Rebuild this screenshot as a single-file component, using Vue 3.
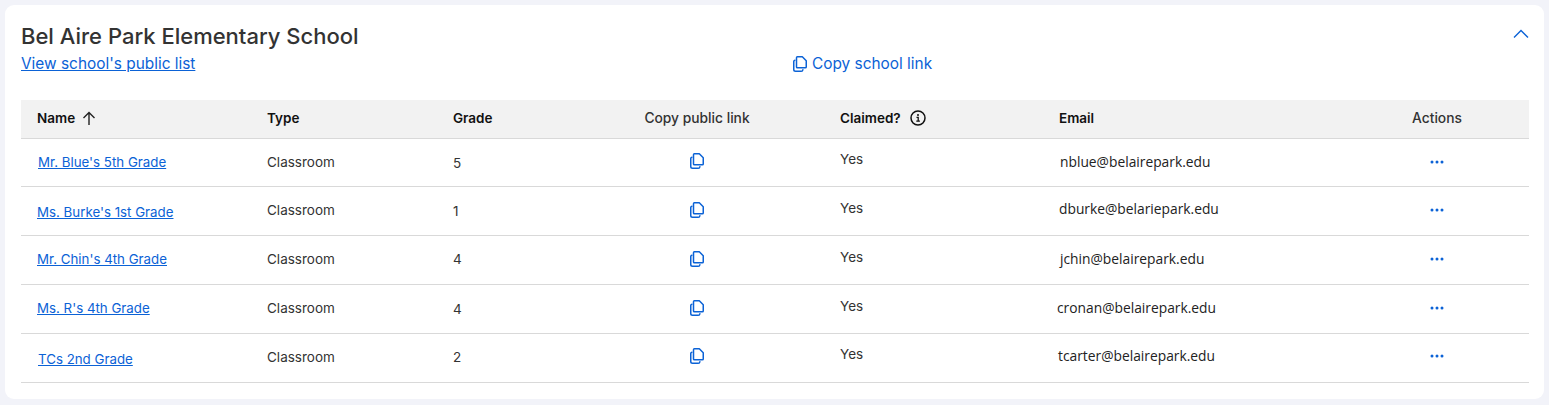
<script setup>
const rows = [
  { name: "Mr. Blue's 5th Grade", grade: '5', email: 'nblue@belairepark.edu', nameX: 1, nameY: -0.5, typeY: -0.5, gradeY: 0.5, claimY: -3.5, emailX: 1, emailY: -1.5, iconY: -1.5 },
  { name: "Ms. Burke's 1st Grade", grade: '1', email: 'dburke@belariepark.edu', nameX: 0, nameY: 1, typeY: -1, gradeY: 0, claimY: -3, emailX: 0, emailY: -3, iconY: -1.5 },
  { name: "Mr. Chin's 4th Grade", grade: '4', email: 'jchin@belairepark.edu', nameX: 0, nameY: -1, typeY: -1, gradeY: -1, claimY: -3, emailX: 1, emailY: -2, iconY: -1.5 },
  { name: "Ms. R's 4th Grade", grade: '4', email: 'cronan@belairepark.edu', nameX: 0, nameY: -1, typeY: -1, gradeY: 0, claimY: -3, emailX: -2, emailY: -2, iconY: -1.5 },
  { name: 'TCs 2nd Grade', grade: '2', email: 'tcarter@belairepark.edu', nameX: 1, nameY: 1, typeY: -1, gradeY: -1, claimY: -4, emailX: -1, emailY: -3, iconY: -2.5 }
]
const shift = (y, x = 0) => ({ marginTop: `${y * 2}px`, marginLeft: `${x}px` })
</script>

<template>
  <div class="page">
    <section class="card">
      <header class="head">
        <div class="head-top">
          <h1 class="title">Bel Aire Park Elementary School</h1>
          <button class="chev" aria-label="Collapse">
            <svg width="16" height="10" viewBox="0 0 16 10" fill="none"><path d="M1 8.500 8 1.500l7 7" stroke="#0b62d6" stroke-width="1.400"/></svg>
          </button>
        </div>
        <div class="head-links">
          <a class="public" href="#">View school's public list</a>
          <a class="copy-school" href="#">
            <svg class="copy" width="14" height="16" viewBox="0 0 14 16" fill="none"><path d="M3.500 1.700c0-.5.400-.9.900-.9h4.900l3.950 3.900v6.200c0 .5-.4.900-.9.900H4.400c-.5 0-.9-.4-.9-.9V1.700Z" stroke="currentColor" stroke-width="1.500" stroke-linejoin="round"/><path d="M1.900 4.200C1.200 4.300.75 4.900.75 5.600v7.900c0 1 .8 1.750 1.750 1.750h5.700c.9 0 1.600-.6 1.700-1.500" stroke="currentColor" stroke-width="1.500" stroke-linecap="round"/></svg>
            <span>Copy school link</span>
          </a>
        </div>
      </header>

      <div class="table">
        <div class="row th">
          <div class="name-col sort"><span>Name</span>
            <svg width="14" height="15" viewBox="0 0 14 15" fill="none"><path d="M7 14V1.500M1.500 7 7 1.500 12.500 7" stroke="#222" stroke-width="1.400"/></svg>
          </div>
          <div>Type</div>
          <div>Grade</div>
          <div class="center soft">Copy public link</div>
          <div class="claimed"><span>Claimed?</span>
            <svg width="16" height="16" viewBox="0 0 16 16" fill="none"><circle cx="8" cy="8" r="7" stroke="#111" stroke-width="1.500"/><circle cx="8" cy="4.900" r="1" fill="#111"/><path d="M6.500 7.300H8.200V11M6.300 11.200h3.600" stroke="#111" stroke-width="1.300"/></svg>
          </div>
          <div>Email</div>
          <div class="center soft">Actions</div>
        </div>

        <div v-for="r in rows" :key="r.email" class="row td">
          <div class="name-col" :style="shift(r.nameY, r.nameX)"><a href="#" class="link">{{ r.name }}</a></div>
          <div :style="shift(r.typeY)">Classroom</div>
          <div class="grade" :style="shift(r.gradeY)">{{ r.grade }}</div>
          <div class="center" :style="shift(r.iconY)">
            <svg class="copy" width="14" height="16" viewBox="0 0 14 16" fill="none"><path d="M3.500 1.700c0-.5.400-.9.900-.9h4.900l3.950 3.900v6.200c0 .5-.4.900-.9.900H4.400c-.5 0-.9-.4-.9-.9V1.700Z" stroke="currentColor" stroke-width="1.500" stroke-linejoin="round"/><path d="M1.900 4.200C1.200 4.300.75 4.900.75 5.600v7.900c0 1 .8 1.750 1.750 1.750h5.700c.9 0 1.600-.6 1.700-1.500" stroke="currentColor" stroke-width="1.500" stroke-linecap="round"/></svg>
          </div>
          <div :style="shift(r.claimY)">Yes</div>
          <div class="email" :style="shift(r.emailY, r.emailX)">{{ r.email }}</div>
          <div class="center dots" :style="shift(r.iconY)">
            <svg width="14" height="4" viewBox="0 0 14 4"><circle cx="2" cy="2" r="1.500" fill="#0b62d6"/><circle cx="7" cy="2" r="1.500" fill="#0b62d6"/><circle cx="12" cy="2" r="1.500" fill="#0b62d6"/></svg>
          </div>
        </div>
      </div>
    </section>
  </div>
</template>

<style>
html, body { margin: 0; background: #f2f3f9; }
</style>

<style scoped>
.page {
  height: 405px;
  box-sizing: border-box;
  padding: 5px 5px 6px;
  font-family: Inter, Roboto, "Liberation Sans", sans-serif;
  color: #333;
}
.card {
  height: 394px;
  box-sizing: border-box;
  background: #fff;
  border-radius: 9px;
  padding: 16px 15px 0 16px;
}
.head { height: 79px; }
.head-top { display: flex; justify-content: space-between; align-items: flex-start; }
.title {
  margin: 0;
  font-size: 22px;
  line-height: 30px;
  font-weight: 500;
  color: #333;
}
.chev { border: 0; background: none; padding: 0; margin: 8px 0 0; line-height: 0; }
.head-links { display: grid; grid-template-columns: 772px auto; margin-top: 1px; line-height: 24px; font-size: 15.4px; }
.public { color: #0b62d6; text-decoration: underline; }
.copy-school { color: #0b62d6; text-decoration: none; display: flex; align-items: center; gap: 5px; }
.copy { color: #0b62d6; flex: none; }
.table { font-size: 13.5px; }
.row {
  display: grid;
  grid-template-columns: 246px 186px 101px 286px 219px 286px 184px;
  align-items: center;
  border-bottom: 1px solid #d9d9d9;
}
.row > div:first-child { padding-left: 16px; }
.th {
  height: 39px;
  box-sizing: border-box;
  background: #f2f2f2;
  font-weight: 600;
  color: #111;
  font-size: 13.5px;
  padding-bottom: 2px;
}
.td { height: 49px; box-sizing: border-box; }
.th + .td { height: 48px; }
.name-col { display: flex; align-items: center; }
.sort { gap: 7px; }
.claimed { display: flex; align-items: center; gap: 9px; }
.center { text-align: center; line-height: 0; }
.soft { color: #333; line-height: normal; font-weight: 500; font-size: 13.8px; }
.link { color: #0b62d6; text-decoration: underline; font-size: 13.3px; }
.grade { color: #333; }
.email { font-family: "Open Sans", "Noto Sans", sans-serif; font-size: 13.8px; color: #222; }
.dots { line-height: 0; }
</style>
